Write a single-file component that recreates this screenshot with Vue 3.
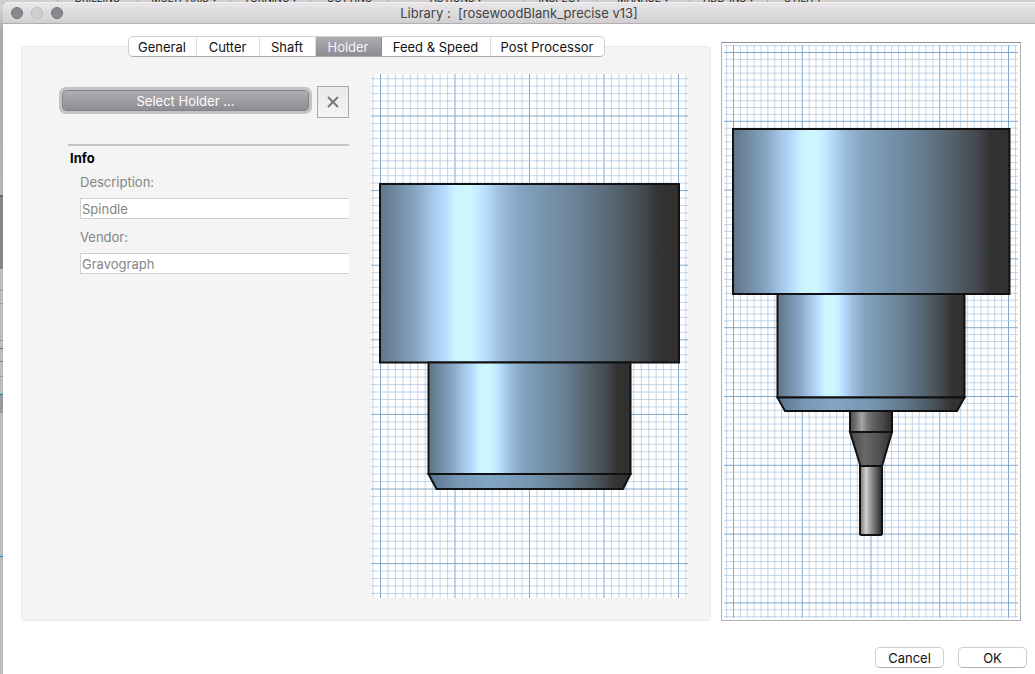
<script setup>
import { ref } from 'vue'

const tabs = ['General', 'Cutter', 'Shaft', 'Holder', 'Feed & Speed', 'Post Processor']
const active = ref('Holder')
const description = ref('Spindle')
const vendor = ref('Gravograph')
const ribbon = ['DRILLING', 'MULTI-AXIS ▾', 'TURNING ▾', 'CUTTING', 'ACTIONS ▾', 'INSPECT', 'MANAGE ▾', 'ADD-INS ▾', 'UTILITY']

// Grid lines: ten minor divisions for each major one.
function lines(origin, step, size) {
  const out = []
  for (let i = -100; i < 200; i++) {
    const p = origin + (i * step) / 10
    if (p >= 0 && p <= size) out.push({ p, major: i % 10 === 0 })
  }
  return out.sort((a, b) => a.major - b.major)
}
const holderX = lines(9.5, 74.5, 317)
const holderY = lines(42, 74.6, 524)
const toolX = lines(9.5, 68.75, 294)
const toolY = lines(7.5, 68.8, 573)

const steel = [
  [0, '#5f7587'], [5, '#6f899f'], [12, '#86a6c4'], [17, '#a3c4e6'], [22, '#b8deff'],
  [25, '#ccf4ff'], [30, '#ccf8ff'], [33, '#c4ebff'], [36, '#b4d9fb'], [40, '#9dbfdb'],
  [47, '#83a4c1'], [55, '#7795ad'], [67, '#697f95'], [76, '#596a77'], [83, '#4e575e'],
  [89, '#42454c'], [93, '#333333'], [100, '#303030']
]
const bevel = [[0, '#58728a'], [15, '#7899b5'], [30, '#82a5c4'], [50, '#7696b0'], [68, '#62788c'], [82, '#4c5860'], [93, '#333333'], [100, '#303030']]
const shank = [[0, '#4c4c4c'], [15, '#747474'], [28, '#a6a6a6'], [42, '#777777'], [60, '#5c5c5c'], [80, '#484848'], [95, '#303030'], [100, '#303030']]
const cone = [[0, '#454545'], [35, '#686868'], [65, '#555555'], [100, '#303030']]
const rod = [[0, '#707070'], [28, '#d2d2d2'], [45, '#a0a0a0'], [70, '#686868'], [92, '#363636'], [100, '#303030']]
const gradients = { steel, bevel, shank, cone, rod }
</script>

<template>
  <div class="desktop">
    <div class="ribbon" aria-hidden="true">
      <span v-for="r in ribbon" :key="r">{{ r }}</span>
    </div>
    <div class="body-row">
      <div class="behind" aria-hidden="true"></div>
      <div class="window">
        <header class="titlebar">
          <div class="lights">
            <button aria-label="Close"></button>
            <button class="off" aria-label="Minimize" disabled></button>
            <button aria-label="Zoom"></button>
          </div>
          <h1>Library :&nbsp; [rosewoodBlank_precise v13]</h1>
        </header>

        <main>
          <section class="editor">
            <div class="tabs" role="tablist">
              <button
                v-for="t in tabs"
                :key="t"
                role="tab"
                :aria-selected="active === t"
                :class="{ active: active === t }"
                @click="active = t"
              >{{ t }}</button>
            </div>
            <div class="panel" role="tabpanel">
              <form @submit.prevent>
                <div class="pick">
                  <button type="button" class="select">Select Holder ...</button>
                  <button type="button" class="clear" aria-label="Remove holder">
                    <svg viewBox="0 0 14 14" width="14" height="14"><path d="M2 2 L12 12 M12 2 L2 12" /></svg>
                  </button>
                </div>
                <div class="info">
                  <h2>Info</h2>
                  <label for="desc">Description:</label>
                  <input id="desc" v-model="description" type="text" />
                  <label for="vendor">Vendor:</label>
                  <input id="vendor" v-model="vendor" type="text" />
                </div>
              </form>
              <svg class="view" viewBox="0 0 317 524" role="img" aria-label="Holder profile">
                <defs>
                  <linearGradient v-for="(stops, name) in gradients" :id="name" :key="name">
                    <stop v-for="s in stops" :key="s[0]" :offset="s[0] + '%'" :stop-color="s[1]" />
                  </linearGradient>
                </defs>
                <rect width="317" height="524" fill="#fff" />
                <line v-for="l in holderX" :key="'x' + l.p" :x1="l.p" :x2="l.p" y1="0" y2="524" :class="l.major ? 'major' : 'minor'" />
                <line v-for="l in holderY" :key="'y' + l.p" :y1="l.p" :y2="l.p" x1="0" x2="317" :class="l.major ? 'major' : 'minor'" />
                <g class="solid">
                  <path d="M9 110H308V288.500H9Z" fill="url(#steel)" />
                  <path d="M57.500 288.500H259.500V400H57.500Z" fill="url(#steel)" />
                  <path d="M57.500 400H259.500L252 415H65.500Z" fill="url(#bevel)" />
                </g>
              </svg>
            </div>
          </section>

          <aside class="preview">
            <svg class="view" viewBox="0 0 294 573" role="img" aria-label="Tool assembly">
              <rect width="294" height="573" fill="#fff" />
              <line v-for="l in toolX" :key="'x' + l.p" :x1="l.p" :x2="l.p" y1="0" y2="573" :class="l.major ? 'major' : 'minor'" />
              <line v-for="l in toolY" :key="'y' + l.p" :y1="l.p" :y2="l.p" x1="0" x2="294" :class="l.major ? 'major' : 'minor'" />
              <g class="solid">
                <path d="M9 84H285.500V249H9Z" fill="url(#steel)" />
                <path d="M53.500 249H240.500V352.500H53.500Z" fill="url(#steel)" />
                <path d="M53.500 352.500H240.500L233 366H61Z" fill="url(#bevel)" />
                <path d="M126 366H168V387H126Z" fill="url(#shank)" />
                <path d="M126 387H168L158 421H136.500Z" fill="url(#cone)" />
                <path d="M136 421H158V489L157 490H137L136 489Z" fill="url(#rod)" />
              </g>
            </svg>
          </aside>
        </main>

        <footer>
          <button>Cancel</button>
          <button>OK</button>
        </footer>
      </div>
    </div>
  </div>
</template>

<style>
body {
  margin: 0;
  background: #bdbdbd;
}
</style>

<style scoped>
* {
  box-sizing: border-box;
}
.desktop {
  min-height: 100vh;
  display: flex;
  flex-direction: column;
  font-family: Inter, "Liberation Sans", sans-serif;
  font-size: 13px;
  line-height: 16px;
  color: #111;
}
button,
input {
  font: inherit;
  color: inherit;
  margin: 0;
  padding: 0;
}
.ribbon {
  height: 2px;
  overflow: hidden;
  display: grid;
  grid-template-columns: 80px 93px 80px 78px 135px 73px 93px 78px 71px;
  align-content: end;
  padding-left: 57px;
  background: #cfcfcf;
  font-size: 10px;
  line-height: 8px;
  color: #222;
}
.ribbon span {
  border-left: 1px solid #aaa;
  text-align: center;
  white-space: nowrap;
}
.body-row {
  flex: 1;
  display: flex;
}
.behind {
  width: 3px;
  background: linear-gradient(
    #d0d0d0 0 8px, #a9a9a9 30px, #b5b5b5 193px,
    #666 193px 195px, #858585 195px 267px, #bcbcbc 267px 288px,
    #999 288px 289px, #bcbcbc 289px 301px, #999 301px 302px,
    #bcbcbc 302px 338px, #999 338px 339px, #bcbcbc 339px 346px,
    #666 346px 347px, #bcbcbc 347px 359px, #777 359px 360px,
    #bcbcbc 360px 374px, #999 374px 375px, #bcbcbc 375px 392px,
    #0a86ba 392px 393px, #999 393px 411px, #bcbcbc 411px 554px,
    #0a86ba 554px 555px, #bcbcbc 555px
  );
}
.window {
  flex: 1;
  display: flex;
  flex-direction: column;
  background: #fff;
  border-top-left-radius: 5px;
}
.titlebar {
  display: grid;
  grid-template-columns: 1fr auto 1fr;
  align-items: center;
  height: 22px;
  padding: 0 8px;
  background: linear-gradient(#e8e6e8, #d1cfd1);
  border-top: 1px solid #f3f2f3;
  border-bottom: 1px solid #b1afb1;
  border-top-left-radius: 5px;
}
.titlebar h1 {
  margin: 0;
  font-size: 13px;
  font-weight: 400;
  color: #444;
}
.lights {
  display: flex;
  gap: 8px;
}
.lights button {
  width: 12px;
  height: 12px;
  border: 1px solid #747277;
  border-radius: 50%;
  background: #89878c;
}
.lights .off {
  border-color: #bcbabc;
  background: #d0ced0;
}
main {
  display: grid;
  grid-template-columns: 690fr 300fr;
  gap: 10px;
  align-items: start;
  padding: 12px 14px 0 18px;
}
.tabs {
  position: relative;
  display: grid;
  grid-template-columns: 68px 63px 56px 66px 109px 113px;
  width: fit-content;
  height: 21px;
  margin: 0 auto -11px;
  border: 1px solid #cfcfcf;
  border-bottom-color: #aaa;
  border-radius: 5px;
  background: #fff;
  overflow: hidden;
}
.tabs button {
  border: 0;
  border-right: 1px solid #ddd;
  background: none;
  white-space: nowrap;
}
.tabs button:last-child {
  border-right: 0;
}
.tabs .active {
  background: linear-gradient(#aeacb2, #8e8c93);
  border-color: #8e8c93;
  color: #f6f6f6;
}
.panel {
  display: grid;
  grid-template-columns: 290fr 317fr;
  gap: 22px;
  align-items: start;
  padding: 27px 22px 22px 37px;
  border: 1px solid #ebebeb;
  border-radius: 4px;
  background: #f4f4f4;
}
form {
  padding-top: 12px;
}
.pick {
  display: flex;
  gap: 8px;
  padding-left: 3px;
}
.select {
  flex: 1;
  height: 21px;
  margin-top: 4px;
  border: 1px solid #858389;
  border-radius: 4px;
  background: linear-gradient(#b0aeb4, #8e8c92);
  box-shadow: 0 0 0 3px #c3c3c4;
  color: #fff;
}
.clear {
  display: grid;
  place-items: center;
  width: 32px;
  height: 32px;
  border: 1px solid #aaa;
  background: linear-gradient(#eaeaea, #f4f4f4);
}
.clear path {
  stroke: #777;
  stroke-width: 2;
  fill: none;
}
.info {
  display: flex;
  flex-direction: column;
  margin: 26px 0 0 9px;
  padding: 4px 0 0 12px;
  border-top: 2px solid #c4c4c4;
  color: #858585;
}
.info h2 {
  margin: 0 0 8px -10px;
  font-size: 13px;
  font-weight: 700;
  color: #000;
}
.info input {
  width: 100%;
  height: 21px;
  margin: 8px 0 10px;
  padding: 0 1px;
  border: 1px solid #d0d0d0;
  border-right: 0;
  border-radius: 0;
  background: #fff;
}
.view {
  display: block;
  width: 100%;
  height: auto;
}
.minor {
  stroke: #a9c3dc;
  stroke-opacity: 0.7;
}
.major {
  stroke: #83a7c9;
}
.solid path {
  stroke: #111;
  stroke-width: 2;
}
.preview {
  margin-top: 6px;
  padding: 2px;
  border: 1px solid #b0b0b0;
  border-top-color: #8f8c8f;
  background: #fff;
}
footer {
  display: flex;
  justify-content: flex-end;
  gap: 14px;
  padding: 26px 8px 6px;
}
footer button {
  width: 69px;
  height: 21px;
  border: 1px solid #cdcdcd;
  border-bottom-color: #b0b0b0;
  border-radius: 5px;
  background: #fff;
}
</style>
